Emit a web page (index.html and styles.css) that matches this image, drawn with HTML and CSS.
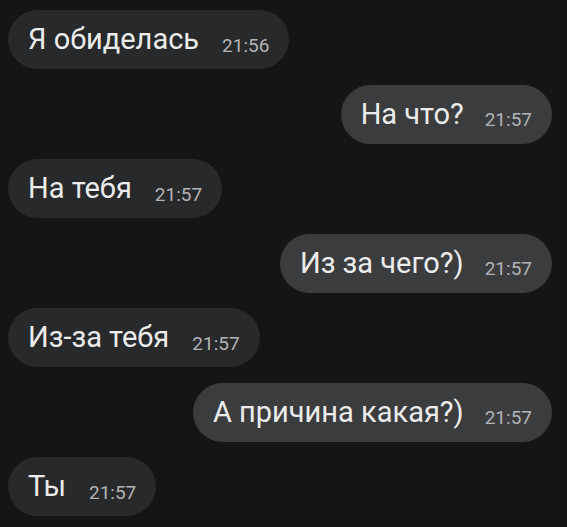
FILE: index.html
```html
<!DOCTYPE html>
<html lang="ru">
<head>
<meta charset="utf-8">
<link rel="stylesheet" href="styles.css">
</head>
<body>
<div class="chat">
  <div class="row in"><div class="bubble"><span class="text">Я обиделась</span><span class="time">21:56</span></div></div>
  <div class="row out"><div class="bubble"><span class="text">На что?</span><span class="time">21:57</span></div></div>
  <div class="row in"><div class="bubble"><span class="text">На тебя</span><span class="time">21:57</span></div></div>
  <div class="row out"><div class="bubble"><span class="text">Из за чего?)</span><span class="time">21:57</span></div></div>
  <div class="row in"><div class="bubble"><span class="text">Из-за тебя</span><span class="time">21:57</span></div></div>
  <div class="row out"><div class="bubble"><span class="text">А причина какая?)</span><span class="time">21:57</span></div></div>
  <div class="row in"><div class="bubble"><span class="text">Ты</span><span class="time">21:57</span></div></div>
</div>
</body>
</html>
```
FILE: styles.css
```css
html, body {
  margin: 0;
  background: #151516;
  height: 100%;
}
body {
  font-family: Roboto, "Liberation Sans", sans-serif;
  color: #ececec;
  overflow: hidden;
}
.chat {
  display: flex;
  flex-direction: column;
  gap: 15.5px;
  padding: 10px 15px 0 8px;
}
.row {
  display: flex;
}
.row.out {
  justify-content: flex-end;
}
.bubble {
  height: 59px;
  box-sizing: border-box;
  border-radius: 30px;
  display: flex;
  align-items: center;
  padding: 0 20px 0 20px;
  gap: 23px;
}
.in .bubble {
  background: #28292b;
}
.out .bubble {
  background: #3b3c3e;
  gap: 21px;
}
.text {
  font-size: 29px;
  line-height: 1;
}
.time {
  font-size: 19px;
  line-height: 1;
  color: #b4b4b6;
  margin-top: 11px;
}
```
